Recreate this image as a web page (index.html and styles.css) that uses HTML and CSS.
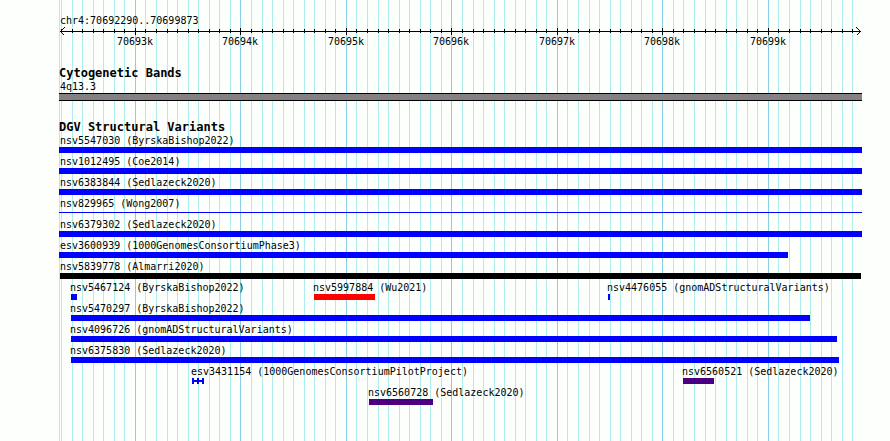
FILE: index.html
```html
<!DOCTYPE html>
<html lang="en">
  <head>
    <meta charset="UTF-8" />
    <meta name="viewport" content="width=device-width, initial-scale=1.0" />
    <title>chr4:70692290..70699873</title>
    <link rel="stylesheet" href="styles.css">
  </head>
  <body>
    <main class="plot" id="plot">
      <svg class="grid" id="grid" aria-hidden="true"></svg>

      <header class="region">
        <h1 class="label">chr4:70692290..70699873</h1>
        <svg class="ruler" id="ruler"></svg>
      </header>

      <section class="track">
        <h2>Cytogenetic Bands</h2>
        <div class="label">4q13.3</div>
        <div class="band"></div>
      </section>

      <section class="track">
        <h2>DGV Structural Variants</h2>
        <div class="row">
          <div class="feature" data-start="70692000" data-end="70700000"><span class="label">nsv5547030 (ByrskaBishop2022)</span><div class="bar"></div></div>
        </div>
        <div class="row">
          <div class="feature" data-start="70692000" data-end="70700000"><span class="label">nsv1012495 (Coe2014)</span><div class="bar"></div></div>
        </div>
        <div class="row">
          <div class="feature" data-start="70692000" data-end="70700000"><span class="label">nsv6383844 (Sedlazeck2020)</span><div class="bar"></div></div>
        </div>
        <div class="row">
          <div class="feature" data-start="70692000" data-end="70700000"><span class="label">nsv829965 (Wong2007)</span><div class="bar thin"></div></div>
        </div>
        <div class="row">
          <div class="feature" data-start="70692000" data-end="70700000"><span class="label">nsv6379302 (Sedlazeck2020)</span><div class="bar"></div></div>
        </div>
        <div class="row">
          <div class="feature" data-start="70692000" data-end="70699190"><span class="label">esv3600939 (1000GenomesConsortiumPhase3)</span><div class="bar"></div></div>
        </div>
        <div class="row">
          <div class="feature" data-start="70692290" data-end="70699882"><span class="label">nsv5839778 (Almarri2020)</span><div class="bar complex"></div></div>
        </div>
        <div class="row">
          <div class="feature" data-start="70692394" data-end="70692451"><span class="label">nsv5467124 (ByrskaBishop2022)</span><div class="bar"></div></div>
          <div class="feature" data-start="70694698" data-end="70695276"><span class="label">nsv5997884 (Wu2021)</span><div class="bar loss"></div></div>
          <div class="feature" data-start="70697484" data-end="70697503"><span class="label">nsv4476055 (gnomADStructuralVariants)</span><div class="bar"></div></div>
        </div>
        <div class="row">
          <div class="feature" data-start="70692394" data-end="70699399"><span class="label">nsv5470297 (ByrskaBishop2022)</span><div class="bar"></div></div>
        </div>
        <div class="row">
          <div class="feature" data-start="70692394" data-end="70699655"><span class="label">nsv4096726 (gnomADStructuralVariants)</span><div class="bar"></div></div>
        </div>
        <div class="row">
          <div class="feature" data-start="70692394" data-end="70699674"><span class="label">nsv6375830 (Sedlazeck2020)</span><div class="bar"></div></div>
        </div>
        <div class="row">
          <div class="feature" data-start="70693541" data-end="70693655"><span class="label">esv3431154 (1000GenomesConsortiumPilotProject)</span><div class="bar span"></div></div>
          <div class="feature" data-start="70698195" data-end="70698489"><span class="label">nsv6560521 (Sedlazeck2020)</span><div class="bar inversion"></div></div>
        </div>
        <div class="row">
          <div class="feature" data-start="70695219" data-end="70695826"><span class="label">nsv6560728 (Sedlazeck2020)</span><div class="bar inversion"></div></div>
        </div>
      </section>
    </main>

    <script>
      const REGION_START = 70692290;
      const REGION_END = 70699873;

      const plot = document.getElementById("plot");
      const grid = document.getElementById("grid");
      const ruler = document.getElementById("ruler");

      function toX(bp) {
        const width = plot.clientWidth;
        const scale = (width - 3) / (REGION_END - REGION_START);
        const x = Math.floor(1.5 + (bp - REGION_START) * scale);
        return Math.max(0, Math.min(width, x));
      }

      function drawScale() {
        const width = plot.clientWidth;
        let lines = '<rect class="minor" x="0" y="0" width="1" height="100%"/>';
        let ticks = `<path class="axis" d="M1 4.5H${width - 1}M5.5 .5L1.5 4.5L5.5 8.5M${width - 5.5} .5L${width - 1.5} 4.5L${width - 5.5} 8.5"/>`;

        for (let bp = Math.ceil(REGION_START / 100) * 100; bp <= REGION_END; bp += 100) {
          const x = toX(bp);
          const major = bp % 1000 === 0;
          lines += `<rect class="${major ? "major" : "minor"}" x="${x}" y="0" width="1" height="100%"/>`;
          ticks += `<rect x="${x}" y="${major ? 1 : 2}" width="1" height="${major ? 7 : 4}"/>`;
          if (major) {
            ticks += `<text x="${x}" y="18">${bp / 1000}k</text>`;
          }
        }

        grid.innerHTML = lines;
        ruler.innerHTML = ticks;
      }

      function placeFeatures() {
        document.querySelectorAll(".feature").forEach(function (feature) {
          const left = toX(Number(feature.dataset.start));
          const right = toX(Number(feature.dataset.end));
          // labels never start left of the plot
          feature.style.setProperty("--label-x", Math.max(1, left - 1) + "px");
          feature.style.setProperty("--bar-x", left + "px");
          feature.style.setProperty("--bar-width", right - left + "px");
        });
      }

      function render() {
        drawScale();
        placeFeatures();
      }

      window.addEventListener("resize", render);
      render();
    </script>
  </body>
</html>
```
FILE: styles.css
```css
body {
  margin: 0;
  background-color: #fdfffc;
  color: #000;
  font-family: "DejaVu Sans Mono", "Liberation Mono", monospace;
  font-size: 10px;
  line-height: 13px;
}

.plot {
  position: relative;
  box-sizing: border-box;
  min-height: 100vh;
  margin: 0 28px 0 59px;
  padding: 15px 0 34px;
}

/* Grid lines behind the tracks */
.grid {
  position: absolute;
  top: 0;
  left: 0;
  width: 100%;
  height: 100%;
}

.minor {
  fill: #afeeee;
}

.major {
  fill: #87ceeb;
}

.region,
.track {
  position: relative;
}

.label {
  display: block;
  margin: 0 0 0 1px;
  font-size: 10px;
  font-weight: normal;
  white-space: nowrap;
}

.region .label {
  line-height: 12px;
}

.ruler {
  display: block;
  width: 100%;
  height: 20px;
  shape-rendering: crispEdges;
}

.ruler text {
  font-size: 10px;
  text-anchor: middle;
}

.axis {
  fill: none;
  stroke: #000;
}

.track {
  margin-top: 20px;
}

.track h2 {
  margin: 0;
  font-size: 12px;
  font-weight: bold;
  line-height: 13px;
}

.band {
  box-sizing: border-box;
  height: 8px;
  background-color: #848084;
  border-top: 1px solid #000;
  border-bottom: 1px solid #000;
}

/* Features of one row share a single grid cell */
.row {
  display: grid;
  grid-template-columns: 100%;
  margin-bottom: 2px;
}

.feature {
  grid-area: 1 / 1;
}

.feature .label {
  margin-left: var(--label-x);
}

.bar {
  width: var(--bar-width);
  height: 6px;
  margin-left: var(--bar-x);
  background-color: #0000ff;
}

.bar.complex {
  background-color: #000;
}

.bar.loss {
  background-color: #ff0000;
}

.bar.inversion {
  background-color: #4b0082;
}

.bar.thin {
  background: linear-gradient(#0000ff, #0000ff) 0 2px / 100% 1px no-repeat;
}

.bar.span {
  background:
    linear-gradient(#0000ff, #0000ff) left / 2px 100% no-repeat,
    linear-gradient(#0000ff, #0000ff) center / 2px 100% no-repeat,
    linear-gradient(#0000ff, #0000ff) right / 2px 100% no-repeat,
    linear-gradient(#0000ff, #0000ff) center / 100% 2px no-repeat;
}
```
